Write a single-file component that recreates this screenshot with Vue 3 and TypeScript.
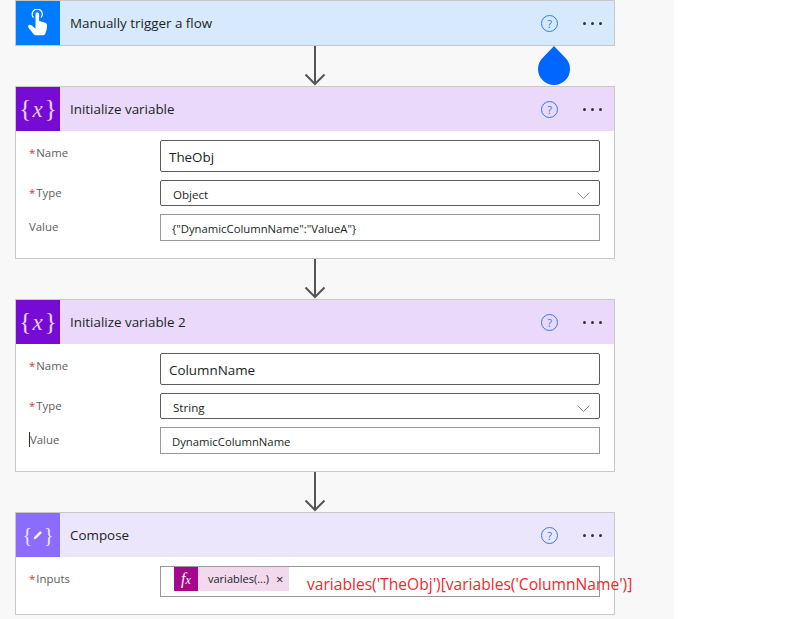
<template>
  <div class="page">
    <div class="canvas">
      <div class="flow">
        <section class="card trigger">
          <header class="card-head">
            <div class="card-icon">
              <svg width="20" height="28" viewBox="0 0 20 28">
                <path d="M5.500 8.500a5 5 0 1 1 7.500 0" fill="none" stroke="#fff" stroke-width="1.400" />
                <path d="M7.500 5a1.800 1.800 0 0 1 3.600 0v7l5.400 1.500c1.700.5 2.500 1.300 2.500 2.800 0 3.200-.6 6-1.800 8.500-.4 1-1 1.400-2 1.400H7.500c-.8 0-1.300-.3-1.800-.9L.6 18.700c-.8-1-.6-2.100.2-2.700.9-.6 1.900-.4 2.700.3l4 3.500z" fill="#fff" />
              </svg>
            </div>
            <span class="card-title">Manually trigger a flow</span>
            <span class="help">?</span>
            <span class="more"><i></i><i></i><i></i></span>
          </header>
        </section>

        <template v-for="card in cards" :key="card.title">
          <div class="arrow">
            <svg width="22" height="40" viewBox="0 0 22 40">
              <path d="M11 0v38M1.500 28.500 11 38l9.500-9.500" fill="none" stroke="#555" stroke-width="2" />
            </svg>
          </div>
          <section class="card" :class="card.kind">
            <header class="card-head">
              <div class="card-icon">
                <span v-if="card.kind === 'variable'" class="brace-icon">{<em>x</em>}</span>
                <span v-else class="brace-icon small">
                  {<svg width="12" height="12" viewBox="0 0 14 14">
                    <path d="M3 9.500 9.500 3l1.500 1.500L4.500 11 2.500 11.500z" fill="#fff" stroke="#fff" stroke-width="1" />
                  </svg>}
                </span>
              </div>
              <span class="card-title">{{ card.title }}</span>
              <span class="help">?</span>
              <span class="more"><i></i><i></i><i></i></span>
            </header>

            <div v-if="card.fields" class="card-body">
              <div v-for="field in card.fields" :key="field.label" class="row" :class="field.size">
                <label class="label">
                  <b v-if="field.required">*</b><span :class="{ caret: field.caret }">{{ field.label }}</span>
                </label>
                <div class="input">
                  <span>{{ field.value }}</span>
                  <svg v-if="field.size === 'select'" class="chevron" width="13" height="7" viewBox="0 0 13 7">
                    <path d="M.5.5l6 6 6-6" fill="none" stroke="#8a8886" stroke-width="1" />
                  </svg>
                </div>
              </div>
            </div>

            <div v-else class="card-body">
              <div class="row">
                <label class="label"><b>*</b><span>Inputs</span></label>
                <div class="input token-input">
                  <div class="token">
                    <span class="fx"><em>f</em><em class="x">x</em></span>
                    <span class="token-text">variables(...)</span>
                    <span class="token-close">×</span>
                  </div>
                  <span class="note">variables('TheObj')[variables('ColumnName')]</span>
                </div>
              </div>
            </div>
          </section>
        </template>

        <svg class="drop" width="32" height="39" viewBox="0 0 32 39">
          <path d="M16 0 27 11.500C30 14.500 32 18 32 23a16 16 0 0 1-32 0C0 18 2 14.500 5 11.500z" fill="#0066ff" />
        </svg>
      </div>
    </div>
  </div>
</template>

<script setup lang="ts">
interface Field {
  label: string
  value: string
  required?: boolean
  size: 'name' | 'select' | 'value'
  caret?: boolean
}

interface Card {
  title: string
  kind: 'variable' | 'compose'
  fields?: Field[]
}

const cards: Card[] = [
  {
    title: 'Initialize variable',
    kind: 'variable',
    fields: [
      { label: 'Name', value: 'TheObj', required: true, size: 'name' },
      { label: 'Type', value: 'Object', required: true, size: 'select' },
      { label: 'Value', value: '{"DynamicColumnName":"ValueA"}', size: 'value' }
    ]
  },
  {
    title: 'Initialize variable 2',
    kind: 'variable',
    fields: [
      { label: 'Name', value: 'ColumnName', required: true, size: 'name' },
      { label: 'Type', value: 'String', required: true, size: 'select' },
      { label: 'Value', value: 'DynamicColumnName', size: 'value', caret: true }
    ]
  },
  {
    title: 'Compose',
    kind: 'compose'
  }
]
</script>

<style>
html,
body {
  background: #fff;
}
</style>

<style scoped>
.page {
  width: 803px;
  height: 619px;
  background: #fff;
  overflow: hidden;
  font-family: "Open Sans", "Liberation Sans", sans-serif;
}

.canvas {
  width: 674px;
  height: 619px;
  background: #f8f8f8;
  padding-left: 15px;
  box-sizing: border-box;
}

.flow {
  position: relative;
  width: 600px;
  display: flex;
  flex-direction: column;
}

.drop {
  position: absolute;
  left: 523px;
  top: 46px;
}

.arrow {
  height: 40px;
  display: flex;
  justify-content: center;
}

.card {
  border: 1px solid #c8c8c8;
  background: #fff;
  box-sizing: border-box;
}

.card-head {
  height: 44px;
  display: flex;
  align-items: center;
  color: #201f1e;
}

.trigger .card-head {
  background: #d7e9fd;
}

.variable .card-head {
  background: #ead9fa;
}

.compose .card-head {
  background: #ece6fd;
}

.card-icon {
  width: 44px;
  height: 44px;
  display: flex;
  align-items: center;
  justify-content: center;
  margin-right: 10px;
}

.trigger .card-icon {
  background: #007aff;
}

.variable .card-icon {
  background: #770bd6;
}

.compose .card-icon {
  background: #8c6cff;
}

.brace-icon {
  display: flex;
  align-items: center;
  color: #e6d3f7;
  font-family: "Liberation Serif", serif;
  font-size: 26px;
  line-height: 1;
}

.brace-icon em {
  font-size: 23px;
  margin: 0 2px 0 1px;
}

.brace-icon.small {
  font-size: 20px;
  color: #efeaff;
}

.card-title {
  flex: 1;
  font-size: 13.4px;
}

.help {
  width: 15px;
  height: 15px;
  border: 1px solid #2f7bf5;
  border-radius: 50%;
  color: #2f7bf5;
  font-size: 11px;
  line-height: 15px;
  text-align: center;
  margin-right: 25px;
}

.more {
  display: flex;
  gap: 5px;
  margin-right: 12px;
}

.more i {
  width: 3px;
  height: 3px;
  border-radius: 50%;
  background: #323130;
}

.card-body {
  padding: 9px 14px 17px 13px;
  display: flex;
  flex-direction: column;
  gap: 8px;
}

.row {
  display: flex;
}

.label {
  width: 131px;
  padding-top: 5px;
  font-size: 11.4px;
  line-height: 16px;
  color: #605e5c;
}

.label b {
  color: #d13438;
  font-weight: 400;
  margin-right: 1px;
}

.caret {
  border-left: 1px solid #333;
}

.input {
  flex: 1;
  height: 27px;
  position: relative;
  display: flex;
  align-items: center;
  padding: 1px 11px 0;
  border: 1px solid #999;
  box-sizing: border-box;
  font-size: 11.3px;
  color: #201f1e;
}

.name .input {
  height: 32px;
  padding: 1px 8px 0;
  border-color: #605e5c;
  border-radius: 2px;
  font-size: 13.400px;
}

.select .input {
  height: 26px;
  padding: 2px 12px 0;
  border-color: #605e5c;
  border-radius: 2px;
  font-size: 11.6px;
}

.chevron {
  position: absolute;
  right: 9px;
  top: 11px;
}

.token-input {
  height: 31px;
  padding: 0 0 0 13px;
}

.token {
  height: 24px;
  display: flex;
  align-items: center;
  background: #f2d9ee;
  padding-right: 5px;
  margin-top: -6px;
  font-size: 11px;
}

.fx {
  width: 24px;
  height: 24px;
  display: flex;
  align-items: center;
  justify-content: center;
  background: #a5068a;
  color: #fff;
  font-family: "Liberation Serif", serif;
  font-size: 16px;
  margin-right: 10px;
}

.fx .x {
  font-size: 12px;
  margin-top: 3px;
}

.token-text {
  margin-right: 7px;
}

.token-close {
  font-size: 13px;
}

.note {
  position: absolute;
  left: 146px;
  top: 6px;
  white-space: nowrap;
  font-size: 15.6px;
  color: #f0282d;
}
</style>
